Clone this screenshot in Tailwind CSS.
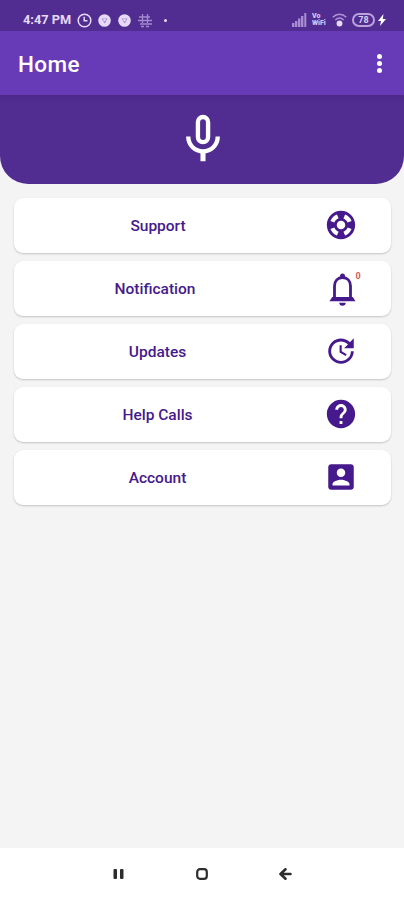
<!DOCTYPE html>
<html lang="en">
<head>
    <meta charset="UTF-8">
    <meta name="viewport" content="width=device-width, initial-scale=1.0">
    <title>Home</title>
    <script src="https://cdn.jsdelivr.net/npm/@tailwindcss/browser@4"></script>
</head>
<body class="h-[900px] flex flex-col overflow-hidden bg-[#f4f4f4] font-['Roboto',sans-serif] text-[#461a8c]">
    <!-- Status bar -->
    <div class="h-[31px] shrink-0 bg-[#512d91] pt-[9px] pl-[23px] pr-[18px] flex items-center justify-between text-[#e6daf7]">
        <div class="flex items-center">
            <span class="w-[49px] text-[12.75px] leading-[22px] font-bold whitespace-nowrap">4:47 PM</span>
            <svg class="w-[15px] h-[15px] ml-[5px]" viewBox="0 0 15 15" fill="none" stroke="currentColor" stroke-width="1.5">
                <circle cx="7.5" cy="7.5" r="6.3"/>
                <path d="M7.2 3.8v4h3.3"/>
            </svg>
            <svg class="w-[13px] h-[13px] ml-[6px]" viewBox="0 0 13 13">
                <circle cx="6.5" cy="6.5" r="6.3" fill="currentColor"/>
                <path d="M3.5 4.5h6L6.700 9.500z" fill="#a48bcd"/>
                <circle cx="6.5" cy="6" r="1.3" fill="#e6daf7"/>
            </svg>
            <svg class="w-[13px] h-[13px] ml-[7px]" viewBox="0 0 13 13">
                <circle cx="6.5" cy="6.5" r="6.3" fill="currentColor"/>
                <path d="M3.5 4.5h6L6.700 9.500z" fill="#a48bcd"/>
                <circle cx="6.5" cy="6" r="1.3" fill="#e6daf7"/>
            </svg>
            <svg class="w-[15px] h-[15px] ml-[7px] text-[#a48bcd]" viewBox="0 0 15 15" fill="none" stroke="currentColor" stroke-width="1.3">
                <path d="M1 4h11M0 7.5h14M2 11h12M4.5 1v9M9.5 1v9M3 13.5h3M8 13.5h3"/>
            </svg>
            <span class="w-[3px] h-[3px] ml-[11px] rounded-full bg-[#e6daf7]"></span>
        </div>
        <div class="flex items-center">
            <svg class="w-[15px] h-[14px]" viewBox="0 0 15 14" fill="#a78dd2">
                <path d="M0 10h2.4v4H0zM3 8h2.4v6H3zM6 5.5h2.4V14H6zM9 3h2.4v11H9zM12.3 0h2v14h-2z"/>
            </svg>
            <span class="w-[16px] ml-[5px] flex flex-col text-[7px] leading-[7px] font-black text-[#d5c5ee]">
                <span>Vo</span>
                <span>WiFi</span>
            </span>
            <svg class="w-[15px] h-[14px] ml-[4px]" viewBox="0 0 15 14" fill="none" stroke="#ad94d6" stroke-width="1.5">
                <path d="M.8 4.2c4-4 9.4-4 13.4 0M3.3 7c2.5-2.3 5.9-2.3 8.4 0"/>
                <circle cx="7.5" cy="10.5" r="2.2" fill="#e6daf7" stroke="#e6daf7"/>
            </svg>
            <span class="w-[23px] h-[14px] ml-[5px] rounded-full border-2 border-[#b9a3dd] flex items-center justify-center text-[9px] leading-none font-bold text-[#d9ccec]">78</span>
            <svg class="w-[8px] h-[12px] ml-[3px]" viewBox="0 0 8 12" fill="#ffffff">
                <path d="M5.5 0L0 7h3L2 12l6-7H4.8z"/>
            </svg>
        </div>
    </div>

    <!-- App bar -->
    <header class="h-[64px] shrink-0 bg-[#673ab7] pl-[18px] pr-[22px] pt-[3px] flex items-center justify-between text-white">
        <h1 class="text-[22.5px] font-medium tracking-[0.4px]">Home</h1>
        <button class="flex flex-col gap-[2px] pb-[3px]" aria-label="More options">
            <span class="w-[5px] h-[5px] rounded-full bg-white"></span>
            <span class="w-[5px] h-[5px] rounded-full bg-white"></span>
            <span class="w-[5px] h-[5px] rounded-full bg-white"></span>
        </button>
    </header>

    <!-- Voice -->
    <section class="h-[89px] shrink-0 bg-[#512d91] bg-linear-to-b from-[#4c2889] from-0% to-[#512d91] to-8% rounded-b-[28px] flex justify-center pt-[15px]">
        <svg class="w-[58px] h-[58px] ml-px" viewBox="0 0 24 24" fill="none" stroke="#ffffff" stroke-width="1.8">
            <rect x="9.9" y="2.9" width="4.2" height="10.4" rx="2.1"/>
            <path d="M5.9 11c0 3.6 2.8 6.1 6.1 6.1s6.1-2.5 6.1-6.1"/>
            <path d="M12 17v4.200" stroke-width="2.1"/>
        </svg>
    </section>

    <!-- Menu -->
    <main class="flex-grow px-[13.5px] pt-[13.5px] flex flex-col gap-[8px] text-[15.5px] font-medium">
        <a href="#" class="h-[55px] bg-white rounded-[9px] shadow-[0_1px_2px_rgba(0,0,0,0.2)] flex items-center">
            <span class="w-[289px] pt-[3px] text-center">Support</span>
            <svg class="w-[34px] h-[34px] ml-[21px]" viewBox="0 0 24 24" fill="currentColor">
                <path d="M12 2C6.48 2 2 6.48 2 12s4.48 10 10 10 10-4.48 10-10S17.52 2 12 2zm7.46 7.12l-2.78 1.15c-.51-1.36-1.58-2.44-2.95-2.94l1.15-2.78c2.1.8 3.77 2.47 4.58 4.57zM12 15c-1.66 0-3-1.34-3-3s1.34-3 3-3 3 1.34 3 3-1.34 3-3 3zM9.13 4.54l1.17 2.78c-1.38.5-2.47 1.59-2.98 2.97L4.54 9.13c.81-2.11 2.48-3.78 4.59-4.59zM4.54 14.87l2.78-1.15c.51 1.38 1.59 2.46 2.97 2.96l-1.17 2.78c-2.1-.81-3.77-2.48-4.58-4.59zm10.34 4.59l-1.15-2.78c1.37-.51 2.45-1.59 2.95-2.97l2.78 1.17c-.81 2.1-2.48 3.77-4.58 4.58z"/>
            </svg>
        </a>
        <a href="#" class="h-[55px] bg-white rounded-[9px] shadow-[0_1px_2px_rgba(0,0,0,0.2)] flex items-center">
            <span class="w-[283px] pt-[3px] text-center">Notification</span>
            <span class="relative ml-[32px] mt-[3px]">
                <svg class="w-[27px] h-[33px]" viewBox="0 0 27 33" fill="none" stroke="currentColor" stroke-width="2.8">
                    <path d="M5.5 25.5V13c0-5 3.2-8.5 8-8.5s8 3.500 8 8.500v12.500"/>
                    <path d="M3.200 24L.500 28.200h26L23.800 24z" fill="currentColor" stroke="none"/>
                    <circle cx="13.5" cy="3" r="2.500" fill="currentColor" stroke="none"/>
                    <path d="M10.300 29.800h6.400a3.200 3 0 0 1-6.400 0z" fill="currentColor" stroke="none"/>
                </svg>
                <span class="absolute left-[27px] -top-[2px] text-[9px] leading-[10px] font-bold text-[#d65a5e]">0</span>
            </span>
        </a>
        <a href="#" class="h-[55px] bg-white rounded-[9px] shadow-[0_1px_2px_rgba(0,0,0,0.2)] flex items-center">
            <span class="w-[288px] pt-[3px] text-center">Updates</span>
            <svg class="w-[34px] h-[34px] ml-[22px]" viewBox="0 0 24 24" fill="currentColor">
                <path d="M21 10.12h-6.78l2.74-2.82c-2.73-2.7-7.15-2.8-9.88-.1-2.73 2.71-2.73 7.08 0 9.79s7.15 2.71 9.88 0C18.32 15.65 19 14.08 19 12.1h2c0 1.98-.88 4.55-2.64 6.29-3.51 3.48-9.21 3.48-12.72 0-3.5-3.47-3.53-9.11-.02-12.58s9.14-3.47 12.65 0L21 3v7.12zM12.5 8v4.25l3.5 2.08-.72 1.21L11 13V8h1.5z"/>
            </svg>
        </a>
        <a href="#" class="h-[55px] bg-white rounded-[9px] shadow-[0_1px_2px_rgba(0,0,0,0.2)] flex items-center">
            <span class="w-[288px] pt-[3px] text-center">Help Calls</span>
            <svg class="w-[34px] h-[34px] ml-[22px]" viewBox="0 0 24 24" fill="currentColor">
                <path d="M12 2C6.48 2 2 6.48 2 12s4.48 10 10 10 10-4.48 10-10S17.52 2 12 2zm1 17h-2v-2h2v2zm2.07-7.75l-.9.92C13.45 12.9 13 13.5 13 15h-2v-.5c0-1.1.45-2.1 1.17-2.83l1.24-1.26c.37-.36.59-.86.59-1.41 0-1.1-.9-2-2-2s-2 .9-2 2H8c0-2.21 1.79-4 4-4s4 1.79 4 4c0 .88-.36 1.68-.93 2.25z"/>
            </svg>
        </a>
        <a href="#" class="h-[55px] bg-white rounded-[9px] shadow-[0_1px_2px_rgba(0,0,0,0.2)] flex items-center">
            <span class="w-[288px] pt-[3px] text-center">Account</span>
            <svg class="w-[34px] h-[34px] ml-[22px]" viewBox="0 0 24 24" fill="currentColor">
                <path d="M3 5v14c0 1.1.89 2 2 2h14c1.1 0 2-.9 2-2V5c0-1.1-.9-2-2-2H5c-1.11 0-2 .9-2 2zm12 4c0 1.66-1.34 3-3 3s-3-1.34-3-3 1.34-3 3-3 3 1.34 3 3zm-9 8c0-2 4-3.1 6-3.1s6 1.1 6 3.1v1H6v-1z"/>
            </svg>
        </a>
    </main>

    <!-- System navigation -->
    <nav class="h-[52px] shrink-0 bg-white pl-[113px] pr-[112px] flex items-center justify-between text-[#2d2d2d]">
        <svg class="w-[11px] h-[10px]" viewBox="0 0 11 10" fill="currentColor">
            <rect x="0.5" width="3.5" height="10" rx="1"/>
            <rect x="7" width="3.5" height="10" rx="1"/>
        </svg>
        <svg class="w-[12px] h-[12px]" viewBox="0 0 12 12" fill="none" stroke="currentColor" stroke-width="2.2">
            <rect x="1.2" y="1.2" width="9.6" height="9.6" rx="2.8"/>
        </svg>
        <svg class="w-[13px] h-[12px]" viewBox="0 0 13 12" fill="none" stroke="currentColor" stroke-width="2.6" stroke-linecap="round" stroke-linejoin="round">
            <path d="M11.5 6h-10M6.5 1.3L1.5 6l5 4.7"/>
        </svg>
    </nav>
</body>
</html>
